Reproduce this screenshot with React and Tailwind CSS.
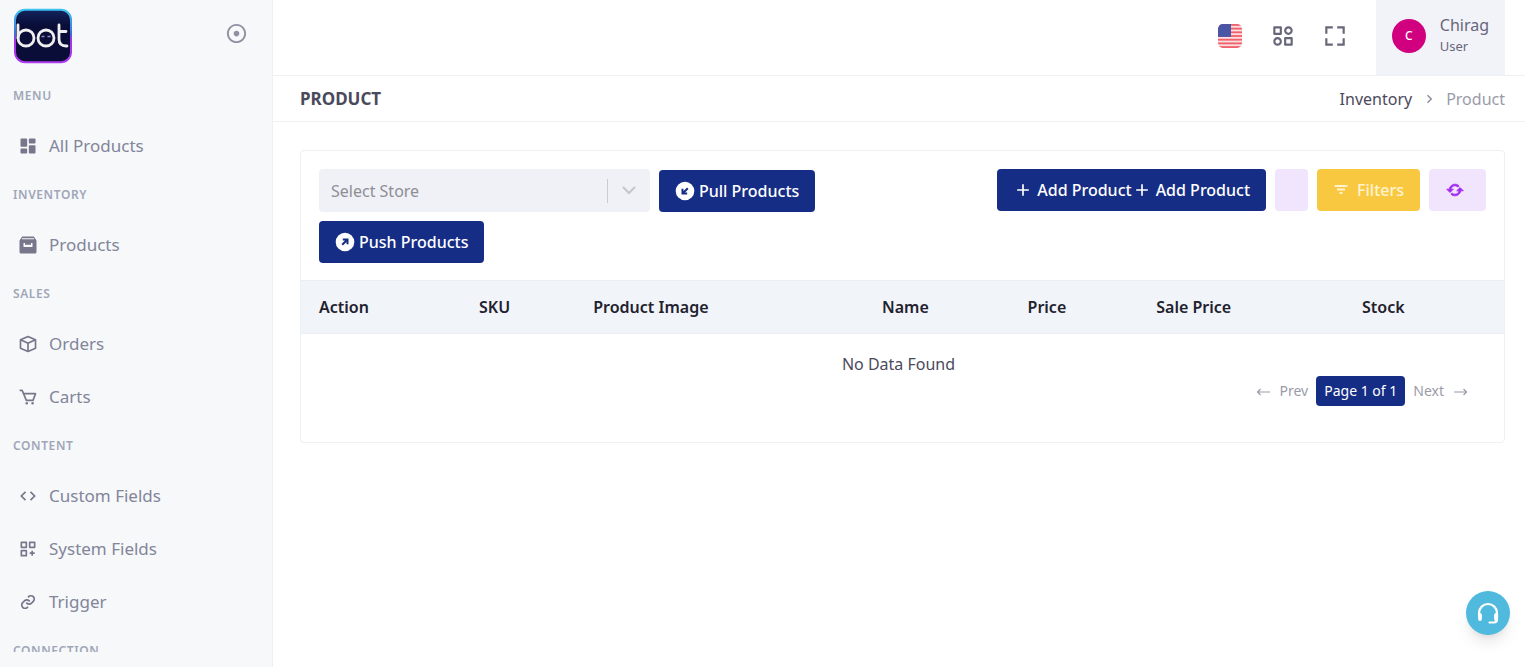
import { Fragment } from "react";
import { RiDashboardFill, RiRecordCircleLine, RiAddLine } from "react-icons/ri";
import {
  BiCategoryAlt, BiFullscreen, BiCube, BiCart, BiCode, BiCustomize, BiLink, BiChevronRight, BiRefresh,
} from "react-icons/bi";

function ArchiveIcon({ size, className }) {
  return (
    <svg width={size} height={size} viewBox="0 0 20 20" className={className} aria-hidden="true">
      <path fill="currentColor" fillRule="evenodd" d="M4.200 1.500h11.600l2.700 4V17a1.500 1.500 0 0 1-1.500 1.500H3A1.500 1.500 0 0 1 1.500 17V5.500zM4 4.300h12v-1H4zM5.500 8v4h9V8H13v1.800H7V8z" />
    </svg>
  );
}

const sections = [
  { title: "MENU", items: [["All Products", RiDashboardFill]] },
  { title: "INVENTORY", items: [["Products", ArchiveIcon]] },
  { title: "SALES", items: [["Orders", BiCube], ["Carts", BiCart]] },
  { title: "CONTENT", items: [["Custom Fields", BiCode], ["System Fields", BiCustomize], ["Trigger", BiLink]] },
  { title: "CONNECTION", items: [] },
];

function Logo() {
  return (
    <svg width="60" height="56" viewBox="0 0 60 56" role="img" aria-label="bot">
      <defs>
        <linearGradient id="rim" x1="0" y1="0" x2="0" y2="1">
          <stop offset="0" stopColor="#3fc3f2" />
          <stop offset="0.45" stopColor="#3f6fd8" />
          <stop offset="0.6" stopColor="#a034e8" />
          <stop offset="1" stopColor="#b03cf0" />
        </linearGradient>
        <linearGradient id="face" x1="0" y1="0" x2="0" y2="1">
          <stop offset="0" stopColor="#12245c" />
          <stop offset="0.3" stopColor="#0a0d38" />
          <stop offset="1" stopColor="#0a0d38" />
        </linearGradient>
      </defs>
      <rect x="2" y="1.800" width="56" height="52.400" rx="10" fill="url(#face)" stroke="url(#rim)" strokeWidth="2" />
      <g fill="none" stroke="#efeff0" strokeWidth="2.800" strokeLinecap="round">
        <path d="M5 17v13" />
        <circle cx="13" cy="30" r="8" />
        <circle cx="33" cy="30" r="8" />
        <path d="M46 17v14q0 7 7 7h1M46 23.500h7" />
      </g>
      <path d="M28.500 28.500h3M34.500 28.500h3" stroke="#8c90b5" strokeWidth="1.500" />
    </svg>
  );
}

function Flag() {
  return (
    <svg width="24" height="24" viewBox="0 0 24 24" role="img" aria-label="English (US)">
      <clipPath id="flag"><rect width="24" height="24" rx="5" /></clipPath>
      <g clipPath="url(#flag)">
        <rect width="24" height="24" fill="#fbdfe0" />
        {[0, 2, 4, 6, 8, 10, 12].map((n) => (
          <rect key={n} y={(n * 24) / 13} width="24" height={24 / 13} fill="#f2606c" />
        ))}
        <rect width="13" height="12.900" fill="#4a56a5" />
      </g>
    </svg>
  );
}

function CircleArrow({ d }) {
  return (
    <svg width="20" height="20" viewBox="0 0 20 20" aria-hidden="true">
      <circle cx="10" cy="10" r="9.300" fill="#fff" />
      <path d={d} fill="none" stroke="#162d86" strokeWidth="2" />
    </svg>
  );
}

function LongArrow({ d }) {
  return (
    <svg width="14" height="10" viewBox="0 0 14 10" fill="none" stroke="currentColor" strokeWidth="1.200" aria-hidden="true">
      <path d={d} />
    </svg>
  );
}

const primary = "flex items-center h-[42px] rounded bg-[#162d86] text-white font-medium text-base whitespace-nowrap px-4";

const columns = [
  ["Action", "w-[13.3%]"], ["SKU", "w-[9.5%]"], ["Product Image", "w-[24%]"], ["Name", "w-[12.1%]"],
  ["Price", "w-[10.7%]"], ["Sale Price", "w-[17.1%]"], ["Stock", "w-[13.3%]"],
];

export default function App() {
  return (
    <div className="flex h-screen overflow-hidden bg-white text-base text-[#4b4a5c] font-['Noto_Sans',sans-serif]">
      <aside className="flex w-[273px] shrink-0 flex-col border-r border-[#eef0f4] bg-[#f6f8fa] pb-[15px]">
        <div className="flex h-[73px] shrink-0 items-start justify-between pt-2 pr-6 pl-[13px]">
          <a href="#home"><Logo /></a>
          <button type="button" aria-label="Pin sidebar" className="mt-3.5 text-[#8f91a3]"><RiRecordCircleLine size={23} /></button>
        </div>
        <nav className="min-h-0 flex-1 overflow-hidden">
          {sections.map(({ title, items }) => (
            <Fragment key={title}>
              <h2 className="flex h-[46px] items-center pl-[13px] text-xs font-semibold tracking-wider text-[#a0a6b8]">{title}</h2>
              <ul>
                {items.map(([label, Icon]) => (
                  <li key={label}>
                    <a href={"#" + label.toLowerCase().replace(" ", "-")} className="flex h-[53px] items-center gap-[11px] pl-[18px] text-[17px] text-[#83859a]">
                      <Icon size={20} className="text-[#77778c]" />{label}
                    </a>
                  </li>
                ))}
              </ul>
            </Fragment>
          ))}
        </nav>
      </aside>

      <div className="relative flex min-w-0 flex-1 flex-col">
        <header className="flex h-[76px] shrink-0 items-stretch justify-end border-b border-[#eff0f3] pr-5">
          <div className="flex items-center pb-1 text-[#686779]">
            <button type="button" aria-label="Language" className="mr-7"><Flag /></button>
            <button type="button" aria-label="Apps" className="mr-[26px]"><BiCategoryAlt size={26} /></button>
            <button type="button" aria-label="Full screen" className="mr-7"><BiFullscreen size={26} /></button>
          </div>
          <button type="button" className="flex items-center gap-3.5 bg-[#f2f2f9] px-4 pb-1 text-left text-[#686779]">
            <span className="flex size-[34px] items-center justify-center rounded-full bg-[#d0007f] text-xs font-medium text-white">C</span>
            <span>
              <span className="block text-base leading-[21px]">Chirag</span>
              <span className="block text-[13px] leading-[21px]">User</span>
            </span>
          </button>
        </header>

        <div className="flex h-[46px] shrink-0 items-center justify-between border-b border-[#eff0f3] pr-5 pl-[27px]">
          <h1 className="text-[17px] font-bold">PRODUCT</h1>
          <nav aria-label="Breadcrumb" className="flex items-center gap-2">
            <a href="#inventory">Inventory</a>
            <BiChevronRight size={18} className="text-[#8f91a3]" />
            <span className="text-[#9a9ba9]">Product</span>
          </nav>
        </div>

        <main className="pt-7 pr-5 pl-[27px]">
          <section className="rounded border border-[#eff0f3] pb-9">
            <div className="flex items-start justify-between px-[18px] pt-[18px] pb-[17px]">
              <div className="flex max-w-[520px] flex-1 flex-wrap items-end gap-[9px]">
                <div className="flex h-[43px] w-[331px] items-center rounded bg-[#eff1f6]">
                  <input aria-label="Select Store" placeholder="Select Store" className="h-full min-w-0 flex-1 bg-transparent px-3 outline-none placeholder:text-[#8e8e96]" />
                  <span className="h-6 w-px bg-[#cccccc]" />
                  <button type="button" aria-label="Open store list" className="flex w-[42px] justify-center text-[#c6c6ca]">
                    <svg width="14" height="9" viewBox="0 0 14 9" fill="none" stroke="currentColor" strokeWidth="2" strokeLinecap="round"><path d="M1.500 1.500L7 7l5.500-5.500" /></svg>
                  </button>
                </div>
                <button type="button" className={primary + " gap-1"}><CircleArrow d="M12.800 7.200l-5 5M7.500 7.800v4.700h4.700" />Pull Products</button>
                <button type="button" className={primary + " gap-1"}><CircleArrow d="M7.200 12.800l5-5M7.800 7.500h4.700v4.700" />Push Products</button>
              </div>
              <div className="flex gap-[9px]">
                <button type="button" className={primary}><RiAddLine size={20} className="mr-1" />Add Product<RiAddLine size={20} className="mr-1" />Add Product</button>
                <button type="button" aria-label="More" className="h-[42px] w-[33px] rounded bg-[#f1e5fe]" />
                <button type="button" className="flex h-[42px] items-center gap-2 rounded bg-[#f9c841] px-4 text-base font-medium text-[#fff3d0]">
                  <svg width="16" height="16" viewBox="0 0 16 16" fill="none" stroke="currentColor" strokeWidth="2" aria-hidden="true"><path d="M1.500 4h13M4 7.500h8M6.500 11h3" /></svg>
                  Filters
                </button>
                <button type="button" aria-label="Refresh" className="flex h-[42px] w-[57px] items-center rounded bg-[#f1e5fe] px-4 text-[#a32bf0]"><BiRefresh size={20} stroke="currentColor" strokeWidth={1} /></button>
              </div>
            </div>
            <table className="w-full table-fixed">
              <thead>
                <tr className="h-[53px] border-y border-[#eceff2] bg-[#f1f4f8] text-left text-[#22212e]">
                  {columns.map(([label, width]) => <th key={label} className={width + " pl-[18px] font-semibold"}>{label}</th>)}
                </tr>
              </thead>
              <tbody>
                <tr><td colSpan={7} className="pt-[18px] pr-2 pb-0 text-center">No Data Found</td></tr>
              </tbody>
            </table>
            <nav aria-label="Pagination" className="flex items-center justify-end gap-2 pr-9 text-sm text-[#9a9ba9]">
              <button type="button" className="flex items-center gap-2.5"><LongArrow d="M14 6H1.500M4.500 3l-3 3 3 3" />Prev</button>
              <span className="flex h-[30px] items-center rounded bg-[#162d86] px-2 text-white">Page 1 of 1</span>
              <button type="button" className="flex items-center gap-2.5">Next<LongArrow d="M0 6h12.500M9.500 3l3 3-3 3" /></button>
            </nav>
          </section>
        </main>

        <button type="button" aria-label="Support" className="absolute right-[15px] bottom-8 flex size-11 items-center justify-center rounded-full bg-[#4fb9de] text-white shadow-lg">
          <svg width="24" height="24" viewBox="0 0 24 24" fill="none" stroke="currentColor" strokeLinecap="round">
            <path d="M3 14v-2a9 9 0 0 1 18 0v6.500q0 3-3 3h-4.500" strokeWidth="2.200" />
            <path d="M4 14v4M20 14v4" strokeWidth="3.800" />
          </svg>
        </button>
      </div>
    </div>
  );
}
